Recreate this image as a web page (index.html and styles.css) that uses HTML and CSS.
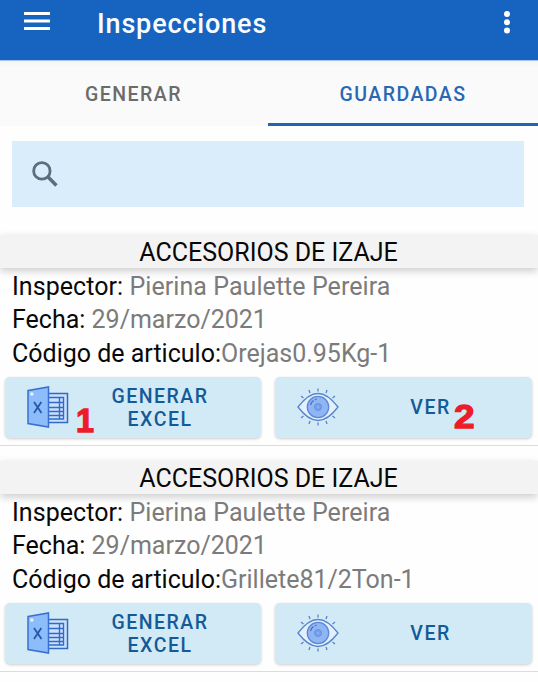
FILE: index.html
```html
<!DOCTYPE html>
<html lang="es">
<head>
<meta charset="utf-8">
<title>Inspecciones</title>
<link rel="stylesheet" href="styles.css">
</head>
<body>
<svg class="defs" aria-hidden="true">
  <symbol id="excel" viewBox="0 0 42 42">
    <path d="M20 7.500h20.500v29H20z" fill="#c9e2ff" stroke="#3469c4" stroke-width="1.500"/>
    <path d="M20 11.500h16.500v21.500H20M20 16.500h16.500M20 21.500h16.500M20 25.500h16.500M20 29.500h16.500M32.500 11.500V33" fill="none" stroke="#3469c4" stroke-width="1.400"/>
    <path d="M1 4.500 21.500 1v40L1 37.500z" fill="#8dbcfb" stroke="#3a70cf" stroke-width="1.500"/>
    <path d="m7 16 7.500 11M14.300 16 7 27" fill="none" stroke="#2457ad" stroke-width="1.800"/>
    <circle cx="4.800" cy="8" r="1.800" fill="#e5f3ff"/>
  </symbol>
  <symbol id="eye" viewBox="0 0 42 38">
    <path d="M1 19C9 8.500 15 5.500 21 5.500S33 8.500 41 19C33 29.500 27 32.500 21 32.500S9 29.500 1 19z" fill="#e4f0fc" stroke="#5585cc" stroke-width="1.300"/>
    <circle cx="21" cy="19" r="10.700" fill="#90b5f4" stroke="#5c88d4" stroke-width="1.300"/>
    <circle cx="21" cy="19" r="3.500" fill="#75a0eb" stroke="#6890dc"/>
    <circle cx="21" cy="19" r="1" fill="#8fb3f3"/>
    <path d="M13.500 17c.5-2 1.500-3.500 3-4.500M18 11.700l1.500-.4" fill="none" stroke="#446fbd" stroke-width="1.200"/>
    <path d="M21 .5v3M12 2l1 3M30 2l-1 3M4 8l2.500 2M38 8l-2.500 2M21 34.500v3M12 36l1-3M30 36l-1-3M4 30l2.500-2M38 30l-2.500-2" fill="none" stroke="#5585cc" stroke-width="1.300"/>
  </symbol>
</svg>
<header class="appbar">
  <svg class="menu" viewBox="0 0 26 18"><path d="M0 1.500h26M0 9h26M0 16.500h26" stroke="#fff" stroke-width="2.800"/></svg>
  <h1 class="title">Inspecciones</h1>
  <svg class="more" viewBox="0 0 6 23"><g fill="#fff"><circle cx="3" cy="3" r="3"/><circle cx="3" cy="11.300" r="3"/><circle cx="3" cy="19.500" r="3"/></g></svg>
</header>
<nav class="tabs">
  <div class="tab">GENERAR</div>
  <div class="tab active">GUARDADAS</div>
</nav>
<div class="search">
  <svg class="lens" viewBox="0 0 25 25"><circle cx="9.500" cy="9.500" r="7.900" fill="none" stroke="#596f7d" stroke-width="2.700"/><path d="m15 15 8.500 8.500" stroke="#596f7d" stroke-width="3.400"/></svg>
</div>
<main>
  <section class="card">
    <h2 class="heading">ACCESORIOS DE IZAJE</h2>
    <div class="details">
      <p class="inspector">Inspector: <b>Pierina Paulette Pereira</b></p>
      <p>Fecha: <b>29/marzo/2021</b></p>
      <p>Código de articulo:<b>Orejas0.95Kg-1</b></p>
    </div>
    <div class="actions">
      <div class="button"><svg class="excel"><use href="#excel"/></svg><span class="label">GENERAR<br>EXCEL</span><span class="mark one">1</span></div>
      <div class="button"><svg class="eye"><use href="#eye"/></svg><span class="label">VER</span><span class="mark two">2</span></div>
    </div>
  </section>
  <section class="card">
    <h2 class="heading">ACCESORIOS DE IZAJE</h2>
    <div class="details">
      <p class="inspector">Inspector: <b>Pierina Paulette Pereira</b></p>
      <p>Fecha: <b>29/marzo/2021</b></p>
      <p>Código de articulo:<b>Grillete81/2Ton-1</b></p>
    </div>
    <div class="actions">
      <div class="button"><svg class="excel"><use href="#excel"/></svg><span class="label">GENERAR<br>EXCEL</span></div>
      <div class="button"><svg class="eye"><use href="#eye"/></svg><span class="label">VER</span></div>
    </div>
  </section>
</main>
</body>
</html>
```
FILE: styles.css
```css
* { box-sizing: border-box; }
body { margin: 0; height: 682px; overflow: hidden; background: #fefefe; font-family: Roboto, sans-serif; }
h1, h2, p { margin: 0; font-weight: 400; }
.defs { position: absolute; width: 0; height: 0; }
.appbar { height: 60px; background: #1664c0; display: flex; align-items: flex-start; padding: 12px 28px 0 24px; }
.menu { width: 26px; height: 18px; flex: none; }
.title { margin: -4px 0 0 47px; color: #f8fcff; font-size: 27px; line-height: 32px; font-weight: 500; letter-spacing: .85px; flex: 1; }
.more { width: 6px; height: 23px; margin-top: -1px; }
.tabs { height: 66px; display: flex; background: linear-gradient(#a9c6e8 0 1px, #f3f3f8 1px, #fafafa 6px); }
.tab { width: 267px; text-align: center; font-size: 19.500px; line-height: 69px; font-weight: 500; letter-spacing: 1.450px; color: #6b6b6b; }
.active { width: 270px; margin-left: 1px; color: #2868b4; border-bottom: 3px solid #2264b2; }
.search { width: 512px; height: 66px; margin: 14.500px 0 0 12px; background: #d9edfb; padding: 20px; }
.lens { display: block; width: 26px; height: 26px; }
.card { height: 211px; border-bottom: 1px solid #dcdcdc; }
main { margin-top: 28.500px; display: flex; flex-direction: column; gap: 15px; }
.heading { height: 33px; background: #f3f3f3; box-shadow: 0 3px 8px #0003; text-align: center; font-size: 25px; line-height: 36px; color: #080808; padding-right: 1px; }
.details { height: 109px; padding: 1.500px 12px 0; font-size: 25px; line-height: 33.500px; color: #080808; white-space: nowrap; }
.details b { font-weight: 400; color: #7b7b7b; }
.inspector { letter-spacing: .06px; }
.actions { display: flex; gap: 14px; padding-left: 4.500px; }
.button { position: relative; width: 256.500px; height: 61px; padding: 0 0 1px 22px; border-radius: 5px; background: #d2eaf6; box-shadow: 0 1px 3px #0003; display: flex; align-items: center; }
.excel { width: 42px; height: 42px; flex: none; }
.eye { width: 42px; height: 38px; flex: none; }
.label { width: 183px; padding-top: 1px; text-align: center; font-size: 19.500px; line-height: 23px; font-weight: 500; letter-spacing: 1.500px; color: #135b98; }
.mark { position: absolute; font: bold 33px/32px "Liberation Sans", sans-serif; color: #ec1c2a; -webkit-text-stroke: 1.300px #ec1c2a; transform-origin: left; }
.one { left: 71.500px; top: 28px; transform: scaleX(.98); }
.two { left: 178.500px; top: 24px; transform: scaleX(1.12); }
```
